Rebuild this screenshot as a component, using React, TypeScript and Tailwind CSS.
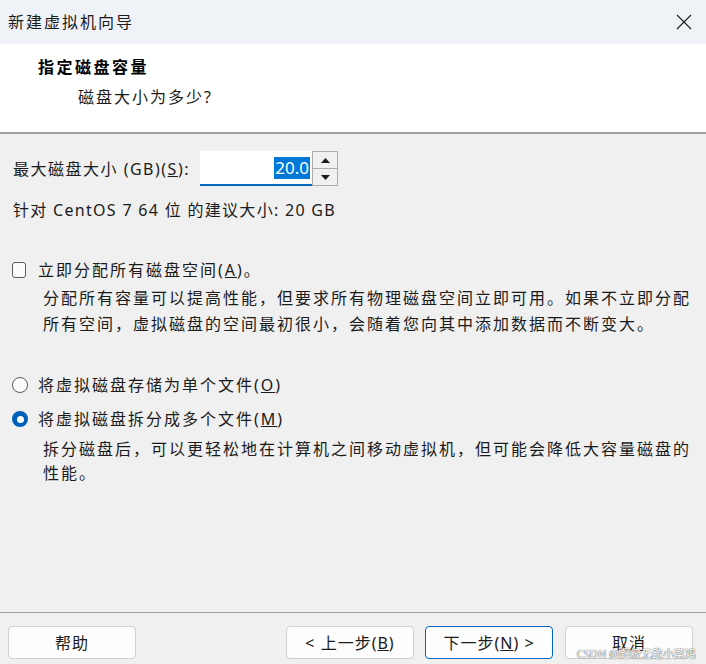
import React from 'react';

const font = { fontFamily: '"Noto Sans", "Noto Sans CJK SC", sans-serif' };

const Btn: React.FC<{ children: React.ReactNode; primary?: boolean; className?: string }> = ({ children, primary, className }) => (
  <button
    className={`h-[33px] w-[128px] rounded-[4px] bg-[#fdfdfd] text-[16px] text-[#1b1b1b] tracking-[1px] ${
      primary ? 'border border-[#0067c0]' : 'border border-[#d0d0d0]'
    } ${className ?? ''}`}
  >
    {children}
  </button>
);

export default function App() {
  return (
    <div style={font} className="w-[706px] h-[664px] bg-[#f0f0f0] flex flex-col text-[#1b1b1b] overflow-hidden">
      {/* title bar */}
      <div className="h-[44px] bg-[#eff2f7] flex items-center justify-between pl-[8px] pr-[14px] shrink-0">
        <span className="text-[16px] tracking-[2px]">新建虚拟机向导</span>
        <svg width="16" height="16" viewBox="0 0 16 16" className="text-[#1b1b1b]">
          <path d="M1 1 L15 15 M15 1 L1 15" stroke="currentColor" strokeWidth="1.1" fill="none" />
        </svg>
      </div>

      {/* header */}
      <div className="h-[88px] bg-white shrink-0 pl-[38px] pt-[11px]">
        <div className="text-[16px] font-bold leading-[24px] tracking-[2.5px] text-black">指定磁盘容量</div>
        <div className="text-[16px] leading-[24px] mt-[6px] ml-[40px] tracking-[2px]">磁盘大小为多少?</div>
      </div>
      <div className="h-[2px] bg-[#a0a0a0] shrink-0" />

      {/* body */}
      <div className="flex-1 px-[12px] whitespace-nowrap">
        <div className="mt-[17px] flex items-center h-[35px]">
          <span className="text-[16px] ml-[1px] w-[187px] tracking-[1.5px]">
            最大磁盘大小 (GB)(<span className="underline">S</span>):
          </span>
          <div className="w-[112px] h-[35px] bg-white border-b-2 border-[#0067c0] flex items-center justify-end pr-[2px]">
            <span className="bg-[#0078d7] text-white text-[17px] leading-[22px] px-[1px]">20.0</span>
          </div>
          <div className="flex flex-col h-[35px] w-[26px]">
            <div className="flex-1 border border-[#adadad] bg-[#f0f0f0] flex items-center justify-center">
              <svg width="9" height="5" viewBox="0 0 9 5"><path d="M4.5 0 L9 5 L0 5 Z" fill="#1b1b1b" /></svg>
            </div>
            <div className="flex-1 border border-t-0 border-[#adadad] bg-[#f0f0f0] flex items-center justify-center">
              <svg width="9" height="5" viewBox="0 0 9 5"><path d="M0 0 L9 0 L4.5 5 Z" fill="#1b1b1b" /></svg>
            </div>
          </div>
        </div>
        <div className="mt-[12px] text-[16px] leading-[24px] ml-[1px] tracking-[1.3px]">
          针对 CentOS 7 64 位 的建议大小: 20 GB
        </div>

        <div className="mt-[36px] flex items-center h-[24px]">
          <span className="w-[14px] h-[16px] rounded-[3px] border border-[#5a5a5a] bg-[#fbfbfb]" />
          <span className="ml-[12px] text-[16px] tracking-[2px]">
            立即分配所有磁盘空间(<span className="underline">A</span>)。
          </span>
        </div>
        <div className="mt-[3px] ml-[31px] text-[16px] leading-[26px] tracking-[2px]">
          分配所有容量可以提高性能，但要求所有物理磁盘空间立即可用。如果不立即分配
          <br />
          所有空间，虚拟磁盘的空间最初很小，会随着您向其中添加数据而不断变大。
        </div>

        <div className="mt-[36px] flex items-center h-[24px]">
          <span className="w-[16px] h-[16px] rounded-full border border-[#5a5a5a] bg-[#fbfbfb]" />
          <span className="ml-[10px] text-[16px] tracking-[2px]">
            将虚拟磁盘存储为单个文件(<span className="underline">O</span>)
          </span>
        </div>
        <div className="mt-[10px] flex items-center h-[24px]">
          <span className="w-[16px] h-[16px] rounded-full bg-[#005fb8] flex items-center justify-center">
            <span className="w-[7px] h-[7px] rounded-full bg-white" />
          </span>
          <span className="ml-[10px] text-[16px] tracking-[2px]">
            将虚拟磁盘拆分成多个文件(<span className="underline">M</span>)
          </span>
        </div>
        <div className="mt-[6px] ml-[31px] text-[16px] leading-[24px] tracking-[2px]">
          拆分磁盘后，可以更轻松地在计算机之间移动虚拟机，但可能会降低大容量磁盘的
          <br />
          性能。
        </div>
      </div>

      {/* footer */}
      <div className="h-[1px] bg-[#a0a0a0] shrink-0" />
      <div className="h-[51px] shrink-0 flex items-start pt-[13px] pl-[8px] pr-[13px] relative">
        <Btn>帮助</Btn>
        <div className="flex-1" />
        <Btn>
          &lt; 上一步(<span className="underline">B</span>)
        </Btn>
        <Btn primary className="ml-[11px]">
          下一步(<span className="underline">N</span>) &gt;
        </Btn>
        <Btn className="ml-[12px]">取消</Btn>
        <span className="absolute right-[10px] bottom-[4px] text-[11px] leading-[12px] text-white [text-shadow:0_0_1px_#555,0_0_1px_#555]">
          CSDN @超级无敌小菜鸡
        </span>
      </div>
    </div>
  );
}
